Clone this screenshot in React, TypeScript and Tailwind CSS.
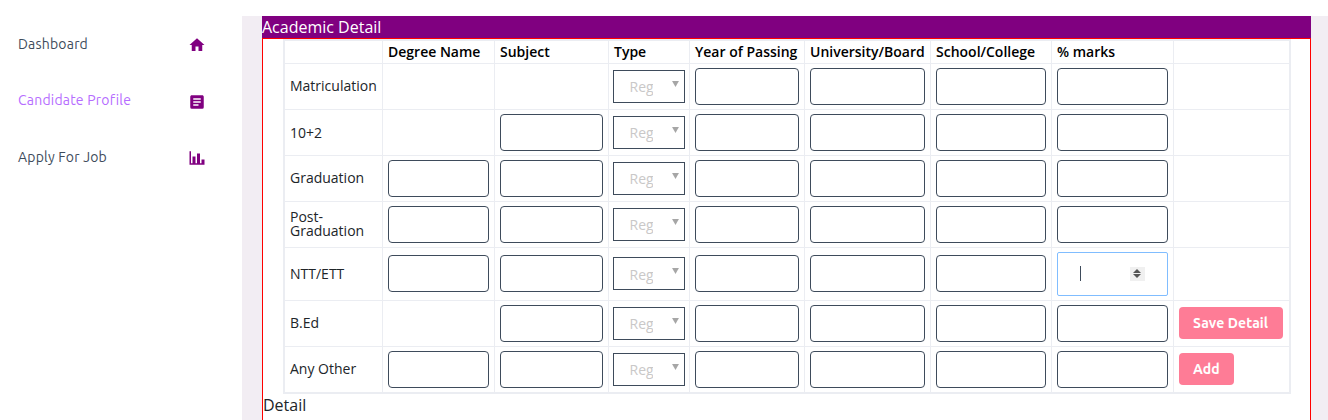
import React from "react";

const MDI = ({ d, className }: { d: string; className: string }) => (
  <svg viewBox="0 0 24 24" className={className} fill="#800080"><path d={d} /></svg>
);

const nav = [
  { label: "Dashboard", color: "text-[#3e4b5b]", d: "M10,20V14H14V20H19V12H22L12,3L2,12H5V20H10Z", h: "h-[56px]" },
  { label: "Candidate Profile", color: "text-[#b66dff]", d: "M14,17H7V15H14M17,13H7V11H17M17,9H7V7H17M19,3H5C3.89,3 3,3.89 3,5V19A2,2 0 0,0 5,21H19A2,2 0 0,0 21,19V5C21,3.89 20.1,3 19,3Z", h: "h-[57px]" },
  { label: "Apply For Job", color: "text-[#3e4b5b]", d: "M22,21H2V3H4V19H6V10H10V19H12V6H16V19H18V14H22V21Z", h: "h-[56px]" },
];

const cols = [98, 112, 114, 81, 115, 126, 121, 122, 117];
const heads = ["", "Degree Name", "Subject", "Type", "Year of Passing", "University/Board", "School/College", "% marks", ""];

type Row = { label: React.ReactNode; pad: string; degree: boolean; subject: boolean; focus?: boolean; btn?: string };
const rows: Row[] = [
  { label: "Matriculation", pad: "pb-[6px]", degree: false, subject: false },
  { label: "10+2", pad: "pb-1", degree: false, subject: true },
  { label: "Graduation", pad: "pb-[6px]", degree: true, subject: true },
  { label: <span className="block leading-[14px]">Post-<br />Graduation</span>, pad: "pb-1", degree: true, subject: true },
  { label: "NTT/ETT", pad: "pb-1", degree: true, subject: true, focus: true },
  { label: "B.Ed", pad: "pb-[6px]", degree: false, subject: true, btn: "Save Detail" },
  { label: "Any Other", pad: "pb-[6px]", degree: true, subject: true, btn: "Add" },
];

const Input = () => (
  <input type="text" className="block w-full h-[37px] bg-white border border-[#3e4b5b] rounded-[4px] outline-none" />
);

const TypeSelect = () => (
  <div className="relative w-[72px]">
    <select disabled className="block w-full h-[33px] appearance-none bg-white border border-[#3e4b5b] rounded-none pl-[16px] pr-[31px] pt-[1px] text-[14px] text-[#c9c8c8] opacity-100 outline-none">
      <option>Regular</option>
    </select>
    <svg viewBox="0 0 8 7" className="absolute right-[6px] top-[11px] w-[7px] h-[6px]" fill="#a6a6a6"><path d="M0 0H8L4 7Z" /></svg>
  </div>
);

const FocusInput = () => (
  <div className="relative">
    <input type="text" className="block w-full h-[44px] bg-white border border-[#80bdff] rounded-[2px] outline-none" />
    <span className="absolute left-[23px] top-[14px] w-px h-[15px] bg-[#3e4b5b]" />
    <span className="absolute left-[73px] top-[15px] w-[15px] h-[14px] bg-[#f0f0f0] flex flex-col items-center justify-center gap-px">
      <svg viewBox="0 0 8 4" className="w-[8px] h-[4px]" fill="#555"><path d="M4 0L8 4H0Z" /></svg>
      <svg viewBox="0 0 8 4" className="w-[8px] h-[4px]" fill="#555"><path d="M0 0H8L4 4Z" /></svg>
    </span>
  </div>
);

const td = "border border-[#ebedf2] px-[5px] py-1 align-middle";

export default function App() {
  return (
    <div className="flex h-[420px] w-[1328px] overflow-hidden bg-white font-['Open_Sans',sans-serif] text-[14px]">
      <aside className="w-[242px] shrink-0 pt-[16px] pl-[18px] pr-[37px]">
        {nav.map((n) => (
          <div key={n.label} className={`flex items-center justify-between ${n.h}`}>
            <span className={`${n.color} font-['Ubuntu','Lato',sans-serif] text-[14px] tracking-[0.2px]`}>{n.label}</span>
            <MDI d={n.d} className="w-[18px] h-[18px] mt-[2px] -mr-[0.5px]" />
          </div>
        ))}
      </aside>
      <main className="flex-1 mt-4 bg-[#f2edf3] pl-5 pr-[17px]">
        <section className="bg-white h-full">
          <h2 className="h-[22px] bg-[#800080] text-white text-[16px] leading-[22px] font-normal">Academic Detail</h2>
          <div className="border border-[#ff0000] border-b-0 h-full pl-5 pr-0">
            <table className="table-fixed border-collapse w-[1006px] text-[14px] text-[#212529] border-2 border-[#ebedf2] leading-normal">
              <colgroup>
                {cols.map((w, i) => <col key={i} style={{ width: w }} />)}
              </colgroup>
              <thead>
                <tr className="h-[23px]">
                  {heads.map((h, i) => (
                    <th key={i} className="border border-[#ebedf2] pl-[5.5px] pr-[4.5px] py-0 text-left font-semibold text-black whitespace-nowrap">{h}</th>
                  ))}
                </tr>
              </thead>
              <tbody>
                {rows.map((r, i) => (
                  <tr key={i}>
                    <td className={`${td} ${r.pad}`}>{r.label}</td>
                    <td className={td}>{r.degree && <Input />}</td>
                    <td className={td}>{r.subject && <Input />}</td>
                    <td className="border border-[#ebedf2] pl-1 pr-[4px] py-1 align-middle"><TypeSelect /></td>
                    <td className={td}><Input /></td>
                    <td className={td}><Input /></td>
                    <td className={td}><Input /></td>
                    <td className={td}>{r.focus ? <FocusInput /> : <Input />}</td>
                    <td className={td}>
                      {r.btn && (
                        <button className="block h-[32px] px-[14.5px] rounded-[4px] bg-[#fe7c96] text-white font-bold text-[14px] tracking-[0.1px] font-['Ubuntu','Lato',sans-serif] whitespace-nowrap">{r.btn}</button>
                      )}
                    </td>
                  </tr>
                ))}
              </tbody>
            </table>
            <p className="text-[16px] leading-[24px] text-[#212529] -mt-[1px] -ml-5">Detail</p>
          </div>
        </section>
      </main>
    </div>
  );
}
